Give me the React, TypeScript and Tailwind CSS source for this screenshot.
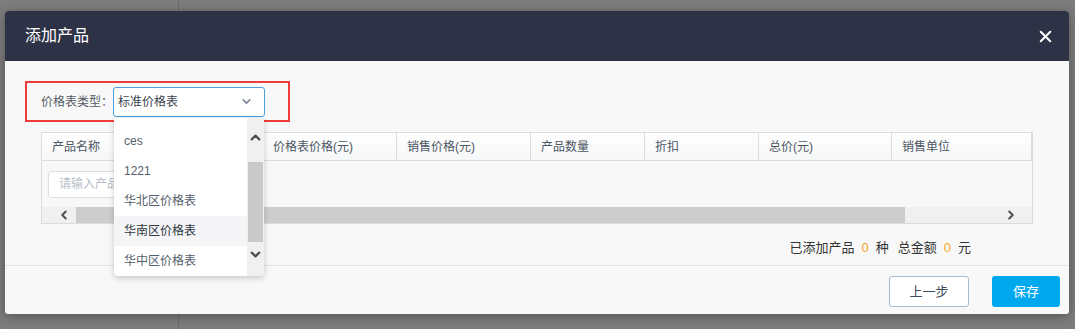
import { ChevronDown, ChevronUp, ChevronLeft, ChevronRight, X } from "lucide-react";

const COLUMNS = [
    { label: "产品名称", w: "w-[221px]" },
    { label: "价格表价格(元)", w: "w-[134px]" },
    { label: "销售价格(元)", w: "w-[134px]" },
    { label: "产品数量", w: "w-[114px]" },
    { label: "折扣", w: "w-[114px]" },
    { label: "总价(元)", w: "w-[133px]" },
    { label: "销售单位", w: "w-[140px]" },
];

const OPTIONS = ["ces", "1221", "华北区价格表", "华南区价格表", "华中区价格表"];

export default function App() {
    const hovered = "华南区价格表";
    return (
        <div
            className="relative w-[1075px] h-[329px] overflow-hidden bg-[#7d7d7d] text-[12px]"
            style={{ fontFamily: '"Liberation Sans", "Noto Sans CJK SC", sans-serif' }}
        >
            {/* page behind the overlay */}
            <div className="flex h-full">
                <div className="w-[179px] h-full border-r border-[#6c6c6c]" />
                <div className="flex-1" />
            </div>

            {/* dialog */}
            <div className="absolute left-[5px] top-[11px] w-[1064px] h-[303px] flex flex-col rounded-[3px] overflow-hidden bg-[#f8f8f8] shadow-[0_2px_12px_rgba(0,0,0,0.35)]">
                <div className="h-[50px] shrink-0 bg-[#2d3246] flex items-center justify-between pl-[20px] pr-[14px]">
                    <span className="text-white text-[16px]">添加产品</span>
                    <X size={19} strokeWidth={2.6} className="text-white" />
                </div>

                <div className="flex-1 flex flex-col pt-[20px]">
                    <div className="pl-[20px]">
                        <div className="w-[265px] h-[41px] border-2 border-[#f03b3b] flex items-center pl-[14px]">
                            <span className="text-[#555b66] w-[72px] shrink-0 whitespace-nowrap">价格表类型：</span>
                            <div className="w-[152px] h-[30px] shrink-0 border border-[#4a9fe0] rounded-[3px] bg-white flex items-center justify-between pl-[4px] pr-[11px]">
                                <span className="text-[#3d4450]">标准价格表</span>
                                <ChevronDown size={13} strokeWidth={3} className="text-[#7d8898]" />
                            </div>
                        </div>
                    </div>

                    {/* table */}
                    <div className="ml-[36px] mt-[10px] w-[992px] border border-[#dcdcdc]">
                        <div className="flex h-[28px] bg-gradient-to-b from-white to-[#f6f7f8] border-b border-[#dcdcdc]">
                            {COLUMNS.map((c) => (
                                <div
                                    key={c.label}
                                    className={`${c.w} shrink-0 flex items-center pl-[10px] border-r border-[#dcdcdc] text-[#4b5563]`}
                                >
                                    {c.label}
                                </div>
                            ))}
                        </div>
                        <div className="h-[46px] flex items-center pl-[6px]">
                            <div className="w-[200px] h-[27px] border border-[#dcdfe4] rounded-[3px] bg-white flex items-center pl-[10px] text-[#b7bec8]">
                                请输入产品名称
                            </div>
                        </div>
                        <div className="h-[16px] bg-[#f0f0f0] flex items-center">
                            <div className="w-[34px] flex pl-[15px]">
                                <ChevronLeft size={14} strokeWidth={3.5} className="text-[#505050]" />
                            </div>
                            <div className="w-[829px] h-full bg-[#cdcdcd]" />
                            <div className="flex-1 flex justify-end pr-[14px]">
                                <ChevronRight size={14} strokeWidth={3.5} className="text-[#505050]" />
                            </div>
                        </div>
                    </div>

                    <div className="flex justify-end pr-[98px] pt-[14px] text-[13px] text-[#333]">
                        <span>已添加产品</span>
                        <span className="text-[#f5a623] mx-[7px]">0</span>
                        <span>种</span>
                        <span className="ml-[9px]">总金额</span>
                        <span className="text-[#f5a623] mx-[7px]">0</span>
                        <span>元</span>
                    </div>
                </div>

                <div className="h-[49px] shrink-0 border-t border-[#dde3ea] flex justify-end items-start pt-[10px] pr-[9px] gap-[23px]">
                    <button className="w-[80px] h-[31px] border border-[#a6bbd0] rounded-[3px] bg-white text-[#3d4a5a] text-[13px]">
                        上一步
                    </button>
                    <button className="w-[68px] h-[31px] rounded-[3px] bg-[#00a9ee] text-white text-[13px]">
                        保存
                    </button>
                </div>
            </div>

            {/* open select menu */}
            <div className="absolute left-[114px] top-[118px] w-[150px] h-[158px] bg-white rounded-b-[4px] shadow-[0_2px_6px_rgba(0,0,0,0.2)] flex overflow-hidden">
                <ul className="flex-1 pt-[8px]">
                    {OPTIONS.map((o) => (
                        <li
                            key={o}
                            className={`h-[30px] flex items-center pl-[10px] ${
                                o === hovered ? "bg-[#f5f5f7] text-[#2f3540]" : "text-[#555e6c]"
                            }`}
                        >
                            {o}
                        </li>
                    ))}
                </ul>
                <div className="w-[17px] bg-[#f0f0f0] flex flex-col items-center">
                    <div className="h-[44px] flex items-start justify-center pt-[12px]">
                        <ChevronUp size={15} strokeWidth={3.5} className="text-[#505050]" />
                    </div>
                    <div className="w-[15px] h-[80px] bg-[#c9c9c9]" />
                    <div className="flex-1 flex items-start justify-center pt-[5px]">
                        <ChevronDown size={15} strokeWidth={3.5} className="text-[#505050]" />
                    </div>
                </div>
            </div>
        </div>
    );
}
